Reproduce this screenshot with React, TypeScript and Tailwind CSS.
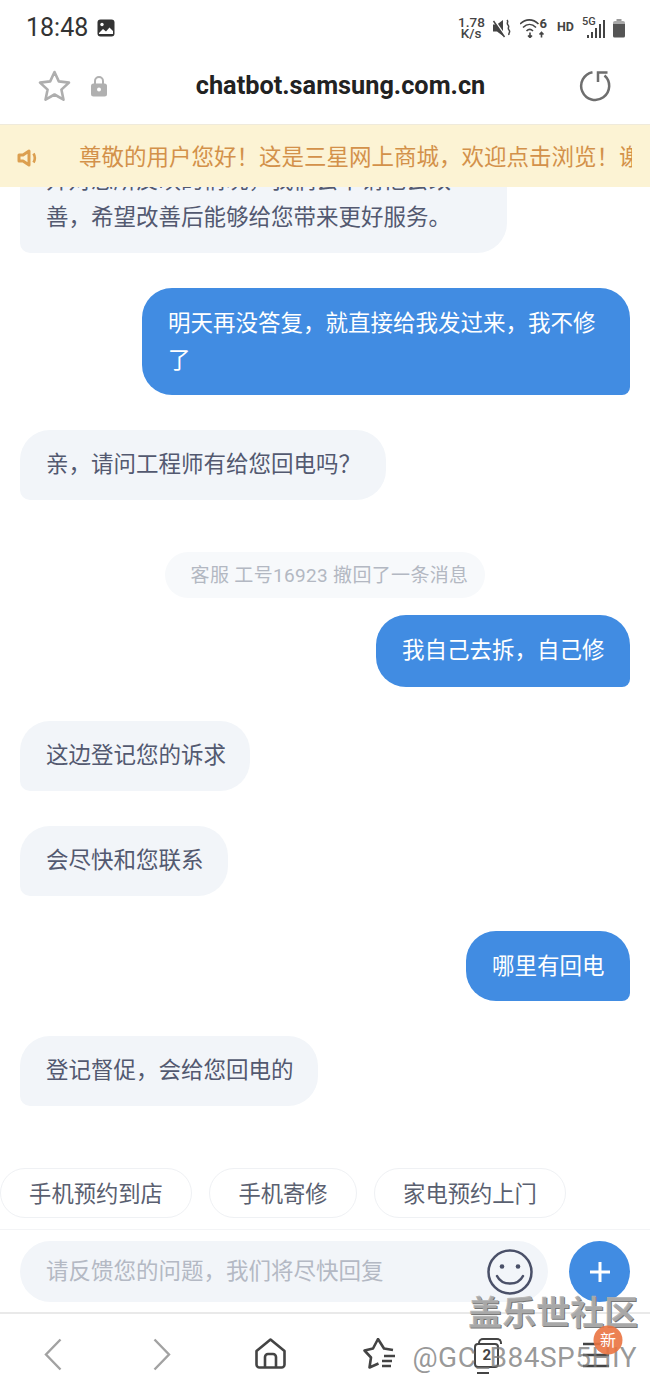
import React from "react";

const cjk = "font-['Roboto','Noto_Sans_CJK_SC',sans-serif]";

const Left: React.FC<{ className: string; children: React.ReactNode }> = ({ className, children }) => (
  <div className={`self-start bg-[#f2f5f9] rounded-[30px] rounded-bl-[10px] pl-[26px] pt-[16px] pb-[17px] text-[22.5px] leading-[37px] text-[#535970] whitespace-nowrap ${className}`}>
    {children}
  </div>
);

const Right: React.FC<{ className: string; children: React.ReactNode }> = ({ className, children }) => (
  <div className={`self-end bg-[#418ce2] rounded-[30px] rounded-br-[8px] pl-[26px] pt-[17px] pb-[17px] text-[22.5px] leading-[37px] text-white whitespace-nowrap ${className}`}>
    {children}
  </div>
);

const Chip: React.FC<{ label: string; width: string }> = ({ label, width }) => (
  <div className={`${width} h-[50px] shrink-0 flex items-center justify-center rounded-full border border-[#eff1f4] bg-white pt-[3px] text-[22.3px] text-[#5a6070]`}>
    {label}
  </div>
);

const StatusIcons = () => (
  <div className="flex items-center text-[#444]">
    <div className="w-[26px] text-center text-[13.5px] leading-[11px] font-medium whitespace-nowrap">
      <div>1.78</div>
      <div>K/s</div>
    </div>
    {/* muted speaker */}
    <svg className="ml-[8px]" width="20" height="20" viewBox="0 0 20 20" fill="none">
      <path d="M1 6.500h4L11 2v16l-6-4.500H1z" fill="#444" />
      <path d="M2 1.500l11 16" stroke="#fff" strokeWidth="1.500" />
      <path d="M1.500 3l11 16" stroke="#444" strokeWidth="1.500" />
      <path d="M15 2c2 2-1 3 1 5s-1 3 1 5-1 3 0 5" stroke="#444" strokeWidth="1.500" />
    </svg>
    {/* wifi */}
    <div className="relative ml-[8px] w-[28px] h-[20px]">
      <svg width="28" height="20" viewBox="0 0 28 20" fill="none" stroke="#444" strokeWidth="1.600">
        <path d="M0 6c5.500-5.500 13-5.500 18.500 0" />
        <path d="M3 9.500c4-4 9-4 13 0" />
        <path d="M6.500 13c2-2 4.500-2 6.500 0" />
        <path d="M10 14.500v5m-2-2l2 2 2-2" />
        <path d="M21.500 19.500v-5m-2 2l2-2 2 2" />
      </svg>
      <span className="absolute right-[1px] top-[-1px] text-[13px] leading-[13px] font-bold">6</span>
    </div>
    <span className="ml-[9px] text-[12.5px] font-bold">HD</span>
    {/* 5G signal */}
    <div className="relative ml-[8px] w-[23px] h-[22px]">
      <span className="absolute left-0 top-[-1px] text-[11px] leading-[12px] font-medium">5G</span>
      <svg className="absolute left-0 top-0" width="23" height="22" viewBox="0 0 23 22" fill="#444">
        <rect x="5" y="18" width="2" height="3" />
        <rect x="9" y="15" width="2" height="6" />
        <rect x="13" y="11" width="2" height="10" />
        <rect x="17" y="7" width="2" height="14" />
        <rect x="21" y="3" width="2" height="18" />
      </svg>
    </div>
    {/* battery */}
    <svg className="ml-[7px]" width="14" height="20" viewBox="0 0 14 20">
      <path d="M4.500 1h5v2h-5z" fill="#999" />
      <path d="M3 3h8a2 2 0 0 1 2 2v1H1V5a2 2 0 0 1 2-2z" fill="#aaa" />
      <path d="M1 6h12v12a1.500 1.500 0 0 1-1.500 1.500h-9A1.500 1.500 0 0 1 1 18z" fill="#555" />
    </svg>
  </div>
);

export default function App() {
  return (
    <div className={`relative w-[650px] h-[1394px] overflow-hidden bg-white flex flex-col ${cjk}`}>
      {/* Status bar */}
      <div className="h-[54px] shrink-0 pl-[26px] pr-[24px] pt-[1px] flex items-center justify-between">
        <div className="flex items-center">
          <span className="text-[25px] font-normal text-[#333]">18:48</span>
          <svg className="ml-[9px]" width="18" height="18" viewBox="0 0 18 18">
            <rect x="0.500" y="0.500" width="17" height="17" rx="3" fill="#333" />
            <circle cx="5" cy="5.500" r="1.700" fill="#fff" />
            <path d="M2 14l4-4 3 2.500 3.500-4 3.500 3.500V15H2z" fill="#fff" />
          </svg>
        </div>
        <StatusIcons />
      </div>

      {/* Address bar */}
      <div className="relative h-[70px] shrink-0 flex items-center justify-between pl-[38px] pr-[39px] pb-[6px]">
        <div className="flex items-center gap-[20px]">
          <svg width="33" height="32" viewBox="0 0 33 32" fill="none" stroke="#aeaeae" strokeWidth="2.600" strokeLinejoin="round">
            <path d="M16.500 2l4.300 9.400 10.200 1.200-7.600 7 2.100 10.100-9-5.200-9 5.200 2.100-10.100-7.600-7 10.200-1.200z" />
          </svg>
          <svg width="16" height="22" viewBox="0 0 16 22">
            <path d="M4 9V6a4 4 0 0 1 8 0v3" fill="none" stroke="#b0b0b0" strokeWidth="2" />
            <rect y="8.500" width="16" height="13" rx="2.500" fill="#b0b0b0" />
            <circle cx="8" cy="14.500" r="2" fill="#fff" />
          </svg>
        </div>
        <span className="ml-[-5px] text-[25.300px] font-bold text-[#222] leading-none">chatbot.samsung.com.cn</span>
        <svg width="32" height="32" viewBox="0 0 32 32" fill="none" stroke="#6e6e6e" strokeWidth="2.500">
          <path d="M13.500 2.200A14 14 0 1 0 25.500 5.500" />
          <path d="M19 12V2.500h9.500" />
        </svg>
      </div>

      {/* Notice banner */}
      <div className="relative z-10 h-[63px] shrink-0 border-t border-[#efeadb] bg-[#fcf3d4] flex items-center pl-[17px] pr-[18px] pt-[3px]">
        <svg className="shrink-0" width="22" height="18" viewBox="0 0 22 18" fill="none">
          <path d="M2 6h4l6-4v14l-6-4H2z" stroke="#dc9f50" strokeWidth="3" strokeLinejoin="round" />
          <path d="M16.500 4.500c1.500 2.500 1.500 6.500 0 9" stroke="#dc9f50" strokeWidth="2.600" />
        </svg>
        <div className="ml-[40px] flex-1 overflow-hidden whitespace-nowrap text-[22.5px] text-[#d3914a]">
          尊敬的用户您好！这是三星网上商城，欢迎点击浏览！谢谢
        </div>
      </div>

      {/* Messages, scrolled down so the first bubble runs under the banner */}
      <div className="h-[1042px] shrink-0 flex flex-col overflow-hidden">
        <div className="-mt-[41px] shrink-0 flex flex-col px-[20px]">
          <Left className="w-[487px] h-[107px]">
            并对您所反映的情况，我们会申请他会改
            <br />
            善，希望改善后能够给您带来更好服务。
          </Left>
          <Right className="mt-[35px] w-[488px] h-[107px]">
            明天再没答复，就直接给我发过来，我不修
            <br />了
          </Right>
          <Left className="mt-[35px] w-[366px] h-[70px]">亲，请问工程师有给您回电吗？</Left>
          <div className="mt-[52px] self-center w-[320px] h-[46px] rounded-full bg-[#f7f9fb] pl-[9px] pt-[2px] flex items-center justify-center text-[19px] tracking-[0.33px] text-[#b3b8c2]">
            客服 工号16923 撤回了一条消息
          </div>
          <Right className="mt-[17px] w-[254px] h-[72px]">我自己去拆，自己修</Right>
          <Left className="mt-[34px] w-[230px] h-[70px]">这边登记您的诉求</Left>
          <Left className="mt-[35px] w-[208px] h-[70px]">会尽快和您联系</Left>
          <Right className="mt-[35px] w-[164px] h-[70px]">哪里有回电</Right>
          <Left className="mt-[35px] w-[298px] h-[70px]">登记督促，会给您回电的</Left>
        </div>
        {/* Quick reply chips */}
        <div className="mt-[62px] shrink-0 flex gap-[17px]">
          <Chip label="手机预约到店" width="w-[192px]" />
          <Chip label="手机寄修" width="w-[148px]" />
          <Chip label="家电预约上门" width="w-[192px]" />
        </div>
      </div>

      {/* Input row */}
      <div className="h-[85px] shrink-0 border-t border-[#f3f4f6] border-b-2 border-b-[#e9e9e9] pl-[20px] pr-[20px] pt-[11px] flex">
        <div className="relative w-[528px] h-[61px] rounded-full bg-[#f2f5f9] pl-[26px] flex items-center text-[22.5px] text-[#b4b9c4]">
          请反馈您的问题，我们将尽快回复
          <svg className="absolute left-[466px] top-[7px]" width="48" height="48" viewBox="0 0 48 48" fill="none" stroke="#4a5068" strokeWidth="2.500">
            <circle cx="24" cy="24" r="21.500" />
            <circle cx="16" cy="18.500" r="2.300" fill="#4a5068" stroke="none" />
            <circle cx="32" cy="18.500" r="2.300" fill="#4a5068" stroke="none" />
            <path d="M11 28c5 10 21 10 26 0" strokeLinecap="round" />
          </svg>
        </div>
        <div className="ml-[21px] w-[61px] h-[61px] rounded-full bg-[#418ce2] flex items-center justify-center">
          <svg width="22" height="22" viewBox="0 0 22 22" stroke="#fff" strokeWidth="3">
            <path d="M11 1v20M1 11h20" />
          </svg>
        </div>
      </div>

      {/* Browser toolbar */}
      <div className="flex-1 flex items-start justify-between px-[36px] pt-[24px]">
        <div className="w-[34px] flex justify-center">
          <svg width="18" height="33" viewBox="0 0 18 33" fill="none" stroke="#a2a2a2" strokeWidth="2.400">
            <path d="M16.500 1.500L2 16.500l14.500 15" />
          </svg>
        </div>
        <div className="w-[34px] flex justify-center">
          <svg width="18" height="33" viewBox="0 0 18 33" fill="none" stroke="#a2a2a2" strokeWidth="2.400">
            <path d="M1.500 1.500L16 16.500l-14.500 15" />
          </svg>
        </div>
        <div className="w-[34px] flex justify-center">
          <svg width="31" height="31" viewBox="0 0 31 31" fill="none" stroke="#444" strokeWidth="2.600" strokeLinejoin="round">
            <path d="M1.500 13L15.500 1.500 29.500 13v13.500a3 3 0 0 1-3 3h-22a3 3 0 0 1-3-3z" />
            <path d="M10 29.500V19a3 3 0 0 1 3-3h5a3 3 0 0 1 3 3v10.500" />
          </svg>
        </div>
        <div className="w-[34px] flex justify-center">
          <svg width="33" height="32" viewBox="0 0 33 32" fill="none" stroke="#444" strokeWidth="2.600" strokeLinejoin="round">
            <path d="M30 12l-9-1.500L15 1l-5 9.500L1.500 12.500l6.500 7-1.500 10 9-4" />
            <path d="M21 18h11M19 23h10M19 28h9" />
          </svg>
        </div>
        <div className="w-[34px] flex justify-center">
          <div className="relative w-[28px] h-[36px]">
            <div className="absolute left-[4px] top-0 w-[24px] h-[6px] rounded-t-[5px] border-t-2 border-x-2 border-[#444]" />
            <div className="absolute left-0 top-[5px] w-[25px] h-[25px] rounded-[4px] border-2 border-[#444] bg-white flex items-center justify-center text-[15px] font-bold leading-none text-[#444]">
              2
            </div>
            <div className="absolute left-[3px] bottom-0 w-[12px] h-[2px] bg-[#444]" />
          </div>
        </div>
        <div className="w-[34px] flex justify-center pt-[4px]">
          <svg width="28" height="27" viewBox="0 0 28 27" stroke="#444" strokeWidth="2.500">
            <path d="M0 2h26M0 13h26M0 24h26" />
          </svg>
        </div>
      </div>

      {/* Forum watermark and badge, laid over the toolbar */}
      <div className="absolute right-[12px] top-[1291px] text-[34px] leading-[44px] font-bold text-[#b0b0b0]/90 [text-shadow:1px_1px_0_#777777]">
        盖乐世社区
      </div>
      <div className="absolute right-[13px] top-[1340px] text-[28px] leading-[36px] tracking-[0.5px] text-[#777777]/75 font-['Roboto',sans-serif]">
        @GC_B84SP5HIY
      </div>
      <div className="absolute left-[608px] top-[1340px] -translate-x-1/2 -translate-y-1/2 w-[29px] h-[29px] rounded-full bg-[#ea7340]/90 flex items-center justify-center text-[16px] text-white">
        新
      </div>
    </div>
  );
}
